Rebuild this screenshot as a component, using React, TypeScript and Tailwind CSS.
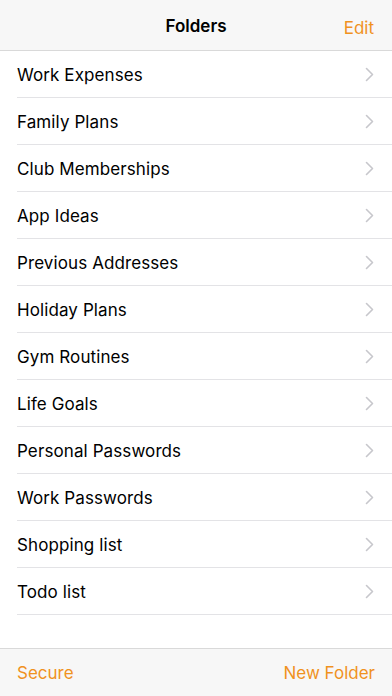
import React from "react";

const folders = [
  "Work Expenses",
  "Family Plans",
  "Club Memberships",
  "App Ideas",
  "Previous Addresses",
  "Holiday Plans",
  "Gym Routines",
  "Life Goals",
  "Personal Passwords",
  "Work Passwords",
  "Shopping list",
  "Todo list",
];

function Chevron() {
  return (
    <svg width="9" height="15" viewBox="0 0 9 15" fill="none">
      <path d="M1.5 1.5L7.5 7.5L1.5 13.5" stroke="#c7c7cc" strokeWidth="1.6" strokeLinecap="round" strokeLinejoin="round" />
    </svg>
  );
}

export default function App() {
  return (
    <div
      className="w-[392px] h-[696px] flex flex-col bg-white overflow-hidden"
      style={{ fontFamily: "Inter, 'Liberation Sans', sans-serif" }}
    >
      <div className="h-[51px] shrink-0 bg-[#f7f7f7] border-b border-[#d9d9d9] flex items-center justify-center relative pt-[3px]">
        <span className="text-[17px] font-semibold text-black">Folders</span>
        <span className="absolute right-[18px] top-[16px] text-[17px] text-[#f0921e]">Edit</span>
      </div>
      <div className="flex-1 flex flex-col">
        {folders.map((f) => (
          <div key={f} className="h-[47px] pl-[17px] flex">
            <div className="flex-1 flex items-center justify-between pr-[18px] border-b border-[#e3e3e6]">
              <span className="text-[17px] text-black pt-[3px] tracking-[0.1px]">{f}</span>
              <Chevron />
            </div>
          </div>
        ))}
      </div>
      <div className="h-[48px] shrink-0 bg-[#f7f7f7] border-t border-[#d9d9d9] flex items-center justify-between px-[17px] pt-[3px]">
        <span className="text-[17px] text-[#f0921e]">Secure</span>
        <span className="text-[17px] text-[#f0921e]">New Folder</span>
      </div>
    </div>
  );
}
